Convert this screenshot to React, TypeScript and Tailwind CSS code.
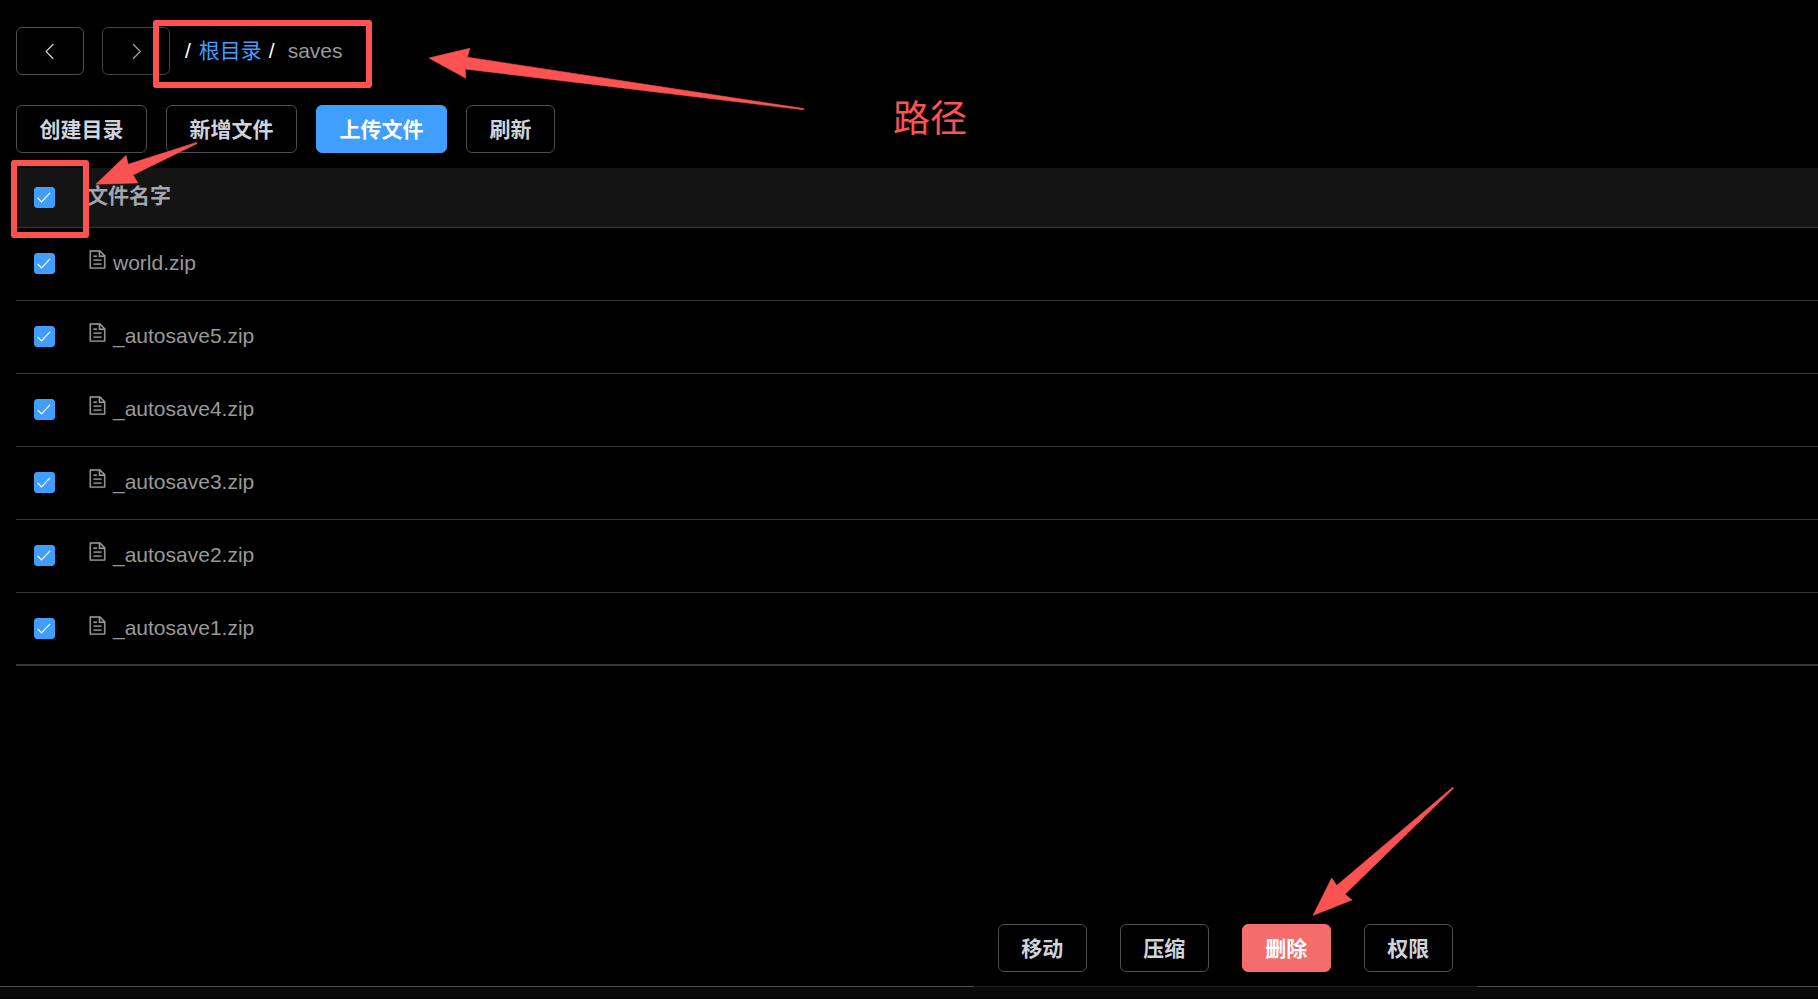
import type { ReactNode } from "react";

const files = ["world.zip", "_autosave5.zip", "_autosave4.zip", "_autosave3.zip", "_autosave2.zip", "_autosave1.zip"];

type ButtonProps = { children: ReactNode; wide?: boolean; tone?: "plain" | "primary" | "danger" };

const tones = {
  plain: "border-[#4c4d4f] bg-black text-[#cfd3dc]",
  primary: "border-[#409eff] bg-[#409eff] text-white",
  danger: "border-[#f56c6c] bg-[#f56c6c] text-white",
};

function Button({ children, wide, tone = "plain" }: ButtonProps) {
  return (
    <button
      type="button"
      className={`flex h-12 items-center justify-center rounded-md border pt-px font-bold whitespace-nowrap ${wide ? "w-[131px]" : "w-[89px]"} ${tones[tone]}`}
    >
      {children}
    </button>
  );
}

function ArrowButton({ label, d, color }: { label: string; d: string; color: string }) {
  return (
    <button
      type="button"
      aria-label={label}
      className={`flex h-12 w-[68px] items-center justify-center rounded-md border ${color}`}
    >
      <svg viewBox="0 0 1024 1024" className="size-[21px]" fill="currentColor">
        <path d={d} />
      </svg>
    </button>
  );
}

function Checkbox({ label }: { label: string }) {
  return (
    <span className="grid size-[21px]">
      <input
        type="checkbox"
        defaultChecked
        aria-label={label}
        className="peer col-start-1 row-start-1 size-[21px] appearance-none rounded-[3px] border border-[#4c4d4f] checked:border-[#409eff] checked:bg-[#409eff]"
      />
      <svg
        viewBox="0 0 21 21"
        className="pointer-events-none invisible col-start-1 row-start-1 size-[21px] peer-checked:visible"
        fill="none"
        stroke="white"
        strokeWidth="1.2"
      >
        <path d="M3.6 10.8 7.5 14.8 16 5.8" />
      </svg>
    </span>
  );
}

function DocumentIcon() {
  return (
    <svg viewBox="0 0 1024 1024" className="mb-1.5 size-[21px] shrink-0" fill="currentColor" stroke="currentColor" strokeWidth="12" aria-hidden="true">
      <path d="M832 384H576V128H192v768h640zm-26.496-64L640 154.496V320zM160 64h480l256 256v608a32 32 0 0 1-32 32H160a32 32 0 0 1-32-32V96a32 32 0 0 1 32-32m160 448h384v64H320zm0-192h160v64H320zm0 384h384v64H320z" />
    </svg>
  );
}

function Annotations() {
  return (
    <div className="pointer-events-none absolute inset-0 overflow-hidden text-[#fc5252]">
      <div className="absolute top-[20px] left-[153px] h-[68px] w-[219px] rounded-[3px] border-6 border-current" />
      <div className="absolute top-[160px] left-[11px] h-[78px] w-[78px] rounded-[3px] border-6 border-current" />
      <svg className="absolute top-0 left-0 h-[999px] w-[1818px]" fill="currentColor" stroke="currentColor" strokeWidth="0.6" strokeLinejoin="round">
        <path d="M95.9 184.2 126 155.4 128.2 164.3 196.5 142.4 197.2 143.5 133 175 137.8 182.9Z" />
        <path d="M429 58 469.8 48.3 467.4 57.2 803.8 108.6 803.8 109.8 465.2 69 465.8 78.3Z" />
        <path d="M1313 915.4 1331.7 878 1336.7 885.4 1452.8 787.2 1453.6 788.2 1345 894.3 1352 900Z" />
      </svg>
      <p className="absolute top-[93px] left-[893px] text-[37px] leading-[54px]">路径</p>
    </div>
  );
}

export default function App() {
  return (
    <div className="relative flex min-h-screen flex-col overflow-hidden bg-black font-['Liberation_Sans','Noto_Sans_CJK_SC',sans-serif] text-[21px] leading-6 text-[#999999]">
      <main className="flex grow flex-col pl-4">
        <div className="flex items-center pt-[27px]">
          <div className="flex gap-[18px]">
            <ArrowButton
              label="后退"
              color="border-[#4c4d4f] text-[#cfd3dc]"
              d="M609.408 149.376 277.76 489.6a32 32 0 0 0 0 44.672l331.648 340.352a29.12 29.12 0 0 0 41.728 0 30.59 30.59 0 0 0 0-42.752L339.264 511.936l311.872-319.872a30.59 30.59 0 0 0 0-42.688 29.12 29.12 0 0 0-41.728 0"
            />
            <ArrowButton
              label="前进"
              color="border-[#414243] text-[#a3a6ad]"
              d="M340.864 149.312a30.59 30.59 0 0 0 0 42.752L652.736 512 340.864 831.872a30.59 30.59 0 0 0 0 42.752 29.12 29.12 0 0 0 41.728 0L714.24 534.336a32 32 0 0 0 0-44.672L382.592 149.376a29.12 29.12 0 0 0-41.728 0"
            />
          </div>
          <nav aria-label="路径" className="flex items-center pl-[15px]">
            <span className="text-white">/</span>
            <a href="#root" className="pl-2 text-[#409eff]">根目录</a>
            <span className="pl-[7px] text-white">/</span>
            <span className="pl-[13px]">saves</span>
          </nav>
        </div>

        <div className="flex gap-[19px] pt-[30px] pb-[15px]">
          <Button wide>创建目录</Button>
          <Button wide>新增文件</Button>
          <Button wide tone="primary">上传文件</Button>
          <Button>刷新</Button>
        </div>

        <table className="w-full border-separate border-spacing-0 text-left">
          <thead>
            <tr className="h-[60px] bg-[#141414]">
              <th className="w-[71px] border-b border-[#363637] p-0 pl-[18px]">
                <Checkbox label="全选" />
              </th>
              <th className="border-b border-[#363637] p-0 pb-[3px] font-bold text-[#a3a6ad]">文件名字</th>
            </tr>
          </thead>
          <tbody>
            {files.map((name) => (
              <tr key={name} className="group h-[73px]">
                <td className="w-[71px] border-b border-[#363637] p-0 pb-px pl-[18px] group-last:border-b-2 group-last:pb-0">
                  <Checkbox label={name} />
                </td>
                <td className="border-b border-[#363637] p-0 pb-[3px] group-last:border-b-2 group-last:pb-px">
                  <div className="flex items-center gap-[5px]">
                    <DocumentIcon />
                    <span>{name}</span>
                  </div>
                </td>
              </tr>
            ))}
          </tbody>
        </table>
      </main>

      <footer>
        <div className="flex items-end">
          <div className="grow-[973] basis-0 border-b border-[#4c4d4f]" />
          <div className="flex gap-[33px] border-b border-[#1c1c1c] px-6 pb-3.5">
            <Button>移动</Button>
            <Button>压缩</Button>
            <Button tone="danger">删除</Button>
            <Button>权限</Button>
          </div>
          <div className="grow-[341] basis-0 border-b border-[#4c4d4f]" />
        </div>
        <div className="h-3 border-b border-black bg-[#0a0a0a]" />
      </footer>

      <Annotations />
    </div>
  );
}
